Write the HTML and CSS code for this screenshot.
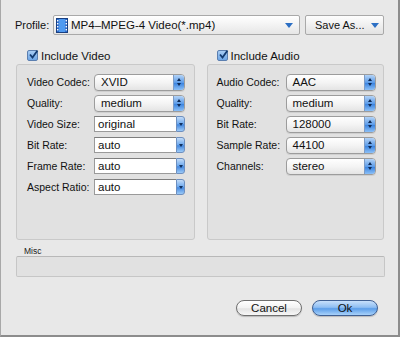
FILE: index.html
```html
<!DOCTYPE html>
<html>
<head>
<meta charset="utf-8">
<link rel="stylesheet" href="styles.css">
</head>
<body>
<div class="win">
  <div class="profile-row">
    <span class="plabel">Profile:</span>
    <div class="profile-pop">
      <svg class="ficon" width="12" height="15" viewBox="0 0 12 15">
        <rect x="0.5" y="0.5" width="11" height="14" fill="#2d6fd0" stroke="#1a3f80"/>
        <rect x="3" y="1" width="6" height="13" fill="#4f9af0"/>
        <g fill="#fff">
          <rect x="1" y="2" width="1.4" height="1.4"/><rect x="1" y="5" width="1.4" height="1.4"/><rect x="1" y="8" width="1.4" height="1.4"/><rect x="1" y="11" width="1.4" height="1.4"/>
          <rect x="9.6" y="2" width="1.4" height="1.4"/><rect x="9.6" y="5" width="1.4" height="1.4"/><rect x="9.6" y="8" width="1.4" height="1.4"/><rect x="9.6" y="11" width="1.4" height="1.4"/>
        </g>
      </svg>
      <span class="ptext">MP4–MPEG-4 Video(*.mp4)</span>
      <span class="darrow"></span>
    </div>
    <div class="save-btn">
      <span class="stext">Save As...</span>
      <span class="sep"></span>
      <span class="darrow"></span>
    </div>
  </div>

  <div class="cols">
    <div class="col">
      <div class="check-row"><span class="cb"><svg width="11" height="11" viewBox="0 0 11 11"><path d="M2 5.5 L4.5 8.5 L9.5 1.5" fill="none" stroke="#123a70" stroke-width="1.8"/></svg></span>Include Video</div>
      <div class="group gl">
        <div class="frow"><span class="lab">Video Codec:</span><div class="pop"><span>XVID</span><span class="step"><i class="up"></i><i class="dn"></i></span></div></div>
        <div class="frow"><span class="lab">Quality:</span><div class="pop"><span>medium</span><span class="step"><i class="up"></i><i class="dn"></i></span></div></div>
        <div class="frow"><span class="lab">Video Size:</span><div class="combo"><span class="field">original</span><span class="cbtn"><i class="dn"></i></span></div></div>
        <div class="frow"><span class="lab">Bit Rate:</span><div class="combo"><span class="field">auto</span><span class="cbtn"><i class="dn"></i></span></div></div>
        <div class="frow"><span class="lab">Frame Rate:</span><div class="combo"><span class="field">auto</span><span class="cbtn"><i class="dn"></i></span></div></div>
        <div class="frow"><span class="lab">Aspect Ratio:</span><div class="combo"><span class="field">auto</span><span class="cbtn"><i class="dn"></i></span></div></div>
      </div>
    </div>
    <div class="col">
      <div class="check-row"><span class="cb"><svg width="11" height="11" viewBox="0 0 11 11"><path d="M2 5.5 L4.5 8.5 L9.5 1.5" fill="none" stroke="#123a70" stroke-width="1.8"/></svg></span>Include Audio</div>
      <div class="group gr">
        <div class="frow"><span class="lab">Audio Codec:</span><div class="pop"><span>AAC</span><span class="step"><i class="up"></i><i class="dn"></i></span></div></div>
        <div class="frow"><span class="lab">Quality:</span><div class="pop"><span>medium</span><span class="step"><i class="up"></i><i class="dn"></i></span></div></div>
        <div class="frow"><span class="lab">Bit Rate:</span><div class="pop"><span>128000</span><span class="step"><i class="up"></i><i class="dn"></i></span></div></div>
        <div class="frow"><span class="lab">Sample Rate:</span><div class="pop"><span>44100</span><span class="step"><i class="up"></i><i class="dn"></i></span></div></div>
        <div class="frow"><span class="lab">Channels:</span><div class="pop"><span>stereo</span><span class="step"><i class="up"></i><i class="dn"></i></span></div></div>
      </div>
    </div>
  </div>

  <div class="misc-label">Misc</div>
  <div class="misc-box"></div>

  <div class="btn-row">
    <div class="btn cancel">Cancel</div>
    <div class="btn ok">Ok</div>
  </div>
</div>
</body>
</html>
```

FILE: styles.css
```css
html, body {
  margin: 0;
  padding: 0;
}
body {
  width: 400px;
  height: 337px;
  background: #e8e8e8;
  font-family: "Liberation Sans", Arial, sans-serif;
  font-size: 11px;
  color: #111;
  overflow: hidden;
  white-space: nowrap;
}
.win {
  box-sizing: border-box;
  width: 400px;
  height: 337px;
  border-left: 1px solid #a8a8a8;
  border-right: 2px solid #8c8c8c;
  border-bottom: 2px solid #8c8c8c;
  padding: 15px 14px 0 14px;
  background: #e8e8e8;
}

/* profile row */
.profile-row {
  display: flex;
  align-items: center;
  height: 20px;
}
.plabel {
  width: 38px;
}
.profile-pop {
  box-sizing: border-box;
  width: 247px;
  height: 20px;
  display: flex;
  align-items: center;
  border: 1px solid #a9a9a9;
  border-radius: 2px;
  background: linear-gradient(#ffffff, #f3f3f3 50%, #e6e6e6);
  padding-left: 2px;
  padding-right: 6px;
}
.ficon { flex: none; }
.ptext {
  flex: 1;
  margin-left: 3px;
  font-size: 11.5px;
}
.darrow {
  width: 0;
  height: 0;
  border-left: 4px solid transparent;
  border-right: 4px solid transparent;
  border-top: 5px solid #2c6fc4;
}
.save-btn {
  box-sizing: border-box;
  margin-left: 5px;
  width: 79px;
  height: 20px;
  display: flex;
  align-items: center;
  border: 1px solid #a9a9a9;
  border-radius: 2px;
  background: linear-gradient(#fdfdfd, #f0f0f0 50%, #e2e2e2);
  padding: 0 6px 0 9px;
}
.stext { flex: 1; }
.sep {
  width: 1px;
  height: 12px;
  background: #c4c4c4;
  margin-right: 6px;
}

/* columns */
.cols {
  display: flex;
  gap: 12px;
  margin-top: 14px;
}
.col {
  display: flex;
  flex-direction: column;
}
.col:first-child { width: 179px; margin-left: 1px; }
.col:last-child { width: 178px; }
.check-row {
  display: flex;
  align-items: center;
  height: 13px;
  font-size: 11.5px;
  padding-left: 11px;
}
.col:last-child .check-row { padding-left: 10px; }
.cb {
  box-sizing: border-box;
  width: 11px;
  height: 11px;
  border: 1px solid #5b7fb0;
  border-radius: 2px;
  background: linear-gradient(#a8cdf4, #6ea6e6);
  margin-right: 3px;
  position: relative;
}
.cb svg { position: absolute; left: 0; top: -2px; }
.group {
  box-sizing: border-box;
  margin-top: 2px;
  height: 176px;
  border: 1px solid #c9c9c9;
  border-radius: 3px;
  background: #e1e1e1;
  padding: 8px 0 0 10px;
  display: flex;
  flex-direction: column;
  gap: 3px;
}
.gr { padding-left: 9px; }
.frow {
  display: flex;
  align-items: center;
  height: 18px;
}
.lab {
  width: 67px;
  font-size: 10.5px;
}
.gr .lab { width: 69px; }

/* popup buttons */
.pop {
  box-sizing: border-box;
  width: 91px;
  height: 17px;
  display: flex;
  align-items: center;
  border: 1px solid #9c9c9c;
  border-radius: 4px;
  background: linear-gradient(#ffffff, #f4f4f4 50%, #e4e4e4);
  padding-left: 6px;
  font-size: 11.5px;
  overflow: hidden;
  box-shadow: 0 1px 0 rgba(0,0,0,0.08);
}
.gr .pop { width: 90px; }
.pop > span:first-child { flex: 1; }
.step {
  width: 10px;
  height: 100%;
  background: linear-gradient(#b3d3f7, #5d9ce8 50%, #3b84e0 55%, #8cc0f7);
  border-left: 1px solid #7c9bc5;
  display: flex;
  flex-direction: column;
  align-items: center;
  justify-content: center;
  gap: 2px;
}
.up, .dn {
  display: block;
  width: 0;
  height: 0;
  border-left: 2px solid transparent;
  border-right: 2px solid transparent;
}
.up { border-bottom: 3px solid #0e2a55; }
.dn { border-top: 3px solid #0e2a55; }

/* combo boxes */
.combo {
  width: 91px;
  height: 16px;
  display: flex;
}
.field {
  box-sizing: border-box;
  flex: 1;
  height: 16px;
  background: #fff;
  border: 1px solid #9a9a9a;
  border-top-color: #7d7d7d;
  border-right: none;
  padding-left: 3px;
  font-size: 11.5px;
  line-height: 14px;
}
.cbtn {
  box-sizing: border-box;
  width: 9px;
  height: 16px;
  border: 1px solid #6d8fbf;
  border-radius: 0 3px 3px 0;
  background: linear-gradient(#c3dcf8, #6aa7ee 50%, #4488e0 55%, #9ccaf7);
  display: flex;
  align-items: center;
  justify-content: center;
}
.cbtn .dn { border-top-color: #10305e; }

/* misc */
.misc-label {
  margin-top: 6px;
  padding-left: 9px;
  font-size: 8.5px;
  height: 10px;
  line-height: 10px;
  color: #222;
}
.misc-box {
  box-sizing: border-box;
  margin-top: 0;
  width: 369px;
  margin-left: 1px;
  height: 21px;
  border: 1px solid #c6c6c6;
  border-top-color: #b8b8b8;
  border-radius: 2px;
  background: #e1e1e1;
}

/* buttons */
.btn-row {
  display: flex;
  justify-content: flex-end;
  gap: 10px;
  margin-top: 23px;
  padding-right: 6px;
}
.btn {
  box-sizing: border-box;
  width: 66px;
  height: 16px;
  border-radius: 8px;
  border: 1px solid #6f6f6f;
  display: flex;
  align-items: center;
  justify-content: center;
  font-size: 11.5px;
  box-shadow: 0 1px 1px rgba(0,0,0,0.2);
}
.cancel {
  background: linear-gradient(#ffffff, #f2f2f2 50%, #e3e3e3 55%, #f7f7f7);
}
.ok {
  border-color: #3f5f92;
  background: linear-gradient(#c8e0fb, #8fbef2 45%, #5c9ee9 55%, #a9d2fa);
}
```
